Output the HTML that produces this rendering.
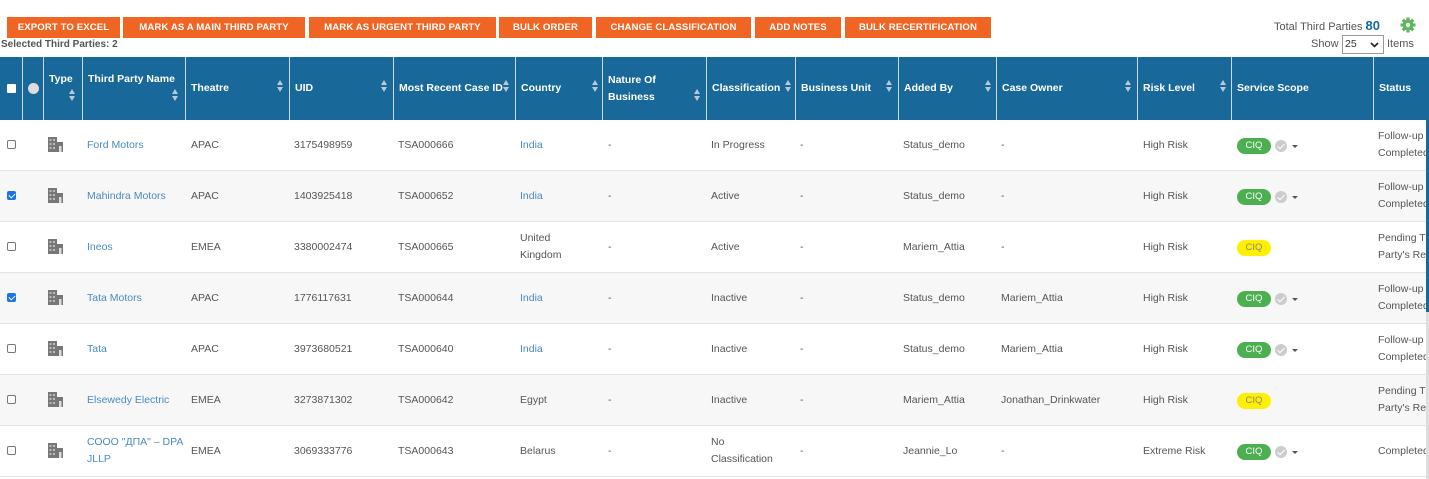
<!DOCTYPE html>
<html><head><meta charset="utf-8"><style>
*{box-sizing:border-box;margin:0;padding:0}
body{width:1429px;height:479px;overflow:hidden;background:#fff;font-family:"Liberation Sans",Arial,sans-serif;position:relative;color:#555}
.btn{position:absolute;top:17px;height:21px;background:#f06424;color:#fff;font-weight:bold;font-size:9.6px;line-height:21px;text-align:center;letter-spacing:0.1px;white-space:nowrap}
.a{position:absolute}
.hd{position:absolute;top:57px;height:63px;left:0;width:1426px;background:#186899}
.hc{position:absolute;top:57px;height:63px;border-left:1px solid #cfd9e3;color:#fff;font-weight:bold;font-size:10.5px;display:flex;align-items:center;padding-left:5px;line-height:17px;white-space:nowrap}
.sort{position:absolute;width:7px;height:13px}
.sort:before{content:"";position:absolute;left:0;top:0;border-left:3.5px solid transparent;border-right:3.5px solid transparent;border-bottom:5px solid #b8c8d8}
.sort:after{content:"";position:absolute;left:0;top:7px;border-left:3.5px solid transparent;border-right:3.5px solid transparent;border-top:5px solid #b8c8d8}
.row{position:absolute;left:0;width:1426px;height:51px;border-bottom:1px solid #e3e3e3}
.c{position:absolute;font-size:10.5px;color:#555;line-height:17px;white-space:nowrap}
.lk{color:#4a8ac0}
.cb{position:absolute;left:7px;width:9px;height:9px;border:1px solid #777;border-radius:2px;background:#fff}
.cb.on{background:#1a73e8;border-color:#1a73e8}
.cb.on:after{content:"";position:absolute;left:2px;top:0px;width:3px;height:5px;border:solid #fff;border-width:0 1.5px 1.5px 0;transform:rotate(45deg)}
.ciq{position:absolute;left:1237px;width:34px;height:16px;border-radius:8px;font-size:9.5px;line-height:16px;text-align:center}
.g{background:#4caf50;color:#fff}
.y{background:#ffef00;color:#888}
.chk{position:absolute;left:1275px;width:12px;height:12px;border-radius:50%;background:#ccc}
.chk:after{content:"";position:absolute;left:4px;top:2px;width:3px;height:6px;border:solid #fff;border-width:0 1.5px 1.5px 0;transform:rotate(45deg)}
.dd{position:absolute;left:1292px;border-left:3px solid transparent;border-right:3px solid transparent;border-top:3px solid #555}
</style></head><body>
<div class="btn" style="left:7px;width:113px">EXPORT TO EXCEL</div>
<div class="btn" style="left:123px;width:182px">MARK AS A MAIN THIRD PARTY</div>
<div class="btn" style="left:309px;width:187px">MARK AS URGENT THIRD PARTY</div>
<div class="btn" style="left:499px;width:93px">BULK ORDER</div>
<div class="btn" style="left:596px;width:155px">CHANGE CLASSIFICATION</div>
<div class="btn" style="left:755px;width:86px">ADD NOTES</div>
<div class="btn" style="left:845px;width:146px">BULK RECERTIFICATION</div>
<div class="a" style="left:1px;top:39px;font-size:10px;font-weight:bold;color:#555">Selected Third Parties: 2</div>
<div class="a" style="left:1274px;top:18px;font-size:11px;color:#555">Total Third Parties <b style="color:#186899;font-size:13px">80</b></div>
<svg class="a" style="left:1400px;top:17px" width="16" height="16" viewBox="0 0 16 16"><g fill="#5cb85c"><circle cx="8" cy="8" r="5.5"/><rect x="6.5" y="0.5" width="3" height="15"/><rect x="0.5" y="6.5" width="15" height="3"/><rect x="6.5" y="0.5" width="3" height="15" transform="rotate(45 8 8)"/><rect x="6.5" y="0.5" width="3" height="15" transform="rotate(-45 8 8)"/></g><circle cx="8" cy="8" r="2.2" fill="#fff"/></svg>
<div class="a" style="left:1311px;top:38px;font-size:11px;color:#555">Show</div>
<div class="a" style="left:1342px;top:35px;width:42px;height:19px;border:1px solid #999;font-size:10.5px;line-height:17px;padding-left:2px;color:#333">25<svg style="position:absolute;right:4px;top:6px" width="9" height="6" viewBox="0 0 9 6"><path d="M1 1l3.5 3.5L8 1" stroke="#222" stroke-width="1.6" fill="none"/></svg></div>
<div class="a" style="left:1387px;top:38px;font-size:11px;color:#555">Items</div>

<div class="hd"></div>
<div class="hc" style="left:0;width:22px;border-left:none"><div style="width:9px;height:9px;background:#fff;border-radius:1px;margin-left:2px"></div></div>
<div class="hc" style="left:22px;width:21px"><div style="width:11px;height:11px;background:#ddd;border-radius:50%"></div></div>
<div class="hc" style="left:43px;width:39px;align-items:flex-start;padding-top:14px">Type<span class="sort" style="left:25px;top:32px"></span></div>
<div class="hc" style="left:82px;width:103px;align-items:flex-start;padding-top:14px">Third Party Name<span class="sort" style="left:89px;top:32px"></span></div>
<div class="hc" style="left:185px;width:104px">Theatre<span class="sort" style="left:91px;top:23px"></span></div>
<div class="hc" style="left:289px;width:104px">UID<span class="sort" style="left:91px;top:23px"></span></div>
<div class="hc" style="left:393px;width:122px">Most Recent Case ID<span class="sort" style="left:109px;top:23px"></span></div>
<div class="hc" style="left:515px;width:87px">Country<span class="sort" style="left:76px;top:23px"></span></div>
<div class="hc" style="left:602px;width:104px">Nature Of<br>Business<span class="sort" style="left:91px;top:32px"></span></div>
<div class="hc" style="left:706px;width:89px">Classification<span class="sort" style="left:78px;top:23px"></span></div>
<div class="hc" style="left:795px;width:103px">Business Unit<span class="sort" style="left:90px;top:23px"></span></div>
<div class="hc" style="left:898px;width:98px">Added By<span class="sort" style="left:86px;top:23px"></span></div>
<div class="hc" style="left:996px;width:141px">Case Owner<span class="sort" style="left:128px;top:23px"></span></div>
<div class="hc" style="left:1137px;width:94px">Risk Level<span class="sort" style="left:82px;top:23px"></span></div>
<div class="hc" style="left:1231px;width:142px">Service Scope</div>
<div class="hc" style="left:1373px;width:53px">Status</div>

<div class="row" style="top:120px"></div>
<div class="row" style="top:171px;background:#f7f7f7"></div>
<div class="row" style="top:222px"></div>
<div class="row" style="top:273px;background:#f7f7f7"></div>
<div class="row" style="top:324px"></div>
<div class="row" style="top:375px;background:#f7f7f7"></div>
<div class="row" style="top:426px"></div>

<svg width="0" height="0" style="position:absolute"><defs><symbol id="bld" viewBox="0 0 15 15"><rect x="0" y="0" width="9" height="15" fill="#777"/><g fill="#bbb"><rect x="1.5" y="2" width="2" height="2"/><rect x="5" y="2" width="2" height="2"/><rect x="1.5" y="6" width="2" height="2"/><rect x="5" y="6" width="2" height="2"/><rect x="1.5" y="10" width="2" height="2"/><rect x="5" y="10" width="2" height="2"/></g><rect x="9" y="5" width="6" height="10" fill="#777"/><rect x="11" y="9" width="2.5" height="6" fill="#ddd"/></symbol></defs></svg>

<div class="cb" style="top:140px"></div><svg class="a" style="left:48px;top:137px" width="15" height="15"><use href="#bld"/></svg>
<div class="c lk" style="left:87px;top:137px">Ford Motors</div><div class="c" style="left:191px;top:137px">APAC</div><div class="c" style="left:294px;top:137px">3175498959</div><div class="c" style="left:398px;top:137px">TSA000666</div><div class="c lk" style="left:520px;top:137px">India</div><div class="c" style="left:608px;top:137px">-</div><div class="c" style="left:711px;top:137px">In Progress</div><div class="c" style="left:800px;top:137px">-</div><div class="c" style="left:903px;top:137px">Status_demo</div><div class="c" style="left:1001px;top:137px">-</div><div class="c" style="left:1143px;top:137px">High Risk</div>
<div class="ciq g" style="top:138px">CIQ</div><div class="chk" style="top:140px"></div><div class="dd" style="top:145px"></div>
<div class="c" style="left:1378px;top:128px">Follow-up<br>Completed</div>

<div class="cb on" style="top:191px"></div><svg class="a" style="left:48px;top:188px" width="15" height="15"><use href="#bld"/></svg>
<div class="c lk" style="left:87px;top:188px">Mahindra Motors</div><div class="c" style="left:191px;top:188px">APAC</div><div class="c" style="left:294px;top:188px">1403925418</div><div class="c" style="left:398px;top:188px">TSA000652</div><div class="c lk" style="left:520px;top:188px">India</div><div class="c" style="left:608px;top:188px">-</div><div class="c" style="left:711px;top:188px">Active</div><div class="c" style="left:800px;top:188px">-</div><div class="c" style="left:903px;top:188px">Status_demo</div><div class="c" style="left:1001px;top:188px">-</div><div class="c" style="left:1143px;top:188px">High Risk</div>
<div class="ciq g" style="top:189px">CIQ</div><div class="chk" style="top:191px"></div><div class="dd" style="top:196px"></div>
<div class="c" style="left:1378px;top:179px">Follow-up<br>Completed</div>

<div class="cb" style="top:242px"></div><svg class="a" style="left:48px;top:239px" width="15" height="15"><use href="#bld"/></svg>
<div class="c lk" style="left:87px;top:239px">Ineos</div><div class="c" style="left:191px;top:239px">EMEA</div><div class="c" style="left:294px;top:239px">3380002474</div><div class="c" style="left:398px;top:239px">TSA000665</div><div class="c" style="left:520px;top:230px">United<br>Kingdom</div><div class="c" style="left:608px;top:239px">-</div><div class="c" style="left:711px;top:239px">Active</div><div class="c" style="left:800px;top:239px">-</div><div class="c" style="left:903px;top:239px">Mariem_Attia</div><div class="c" style="left:1001px;top:239px">-</div><div class="c" style="left:1143px;top:239px">High Risk</div>
<div class="ciq y" style="top:240px">CIQ</div>
<div class="c" style="left:1378px;top:230px">Pending Third<br>Party's Response</div>

<div class="cb on" style="top:293px"></div><svg class="a" style="left:48px;top:290px" width="15" height="15"><use href="#bld"/></svg>
<div class="c lk" style="left:87px;top:290px">Tata Motors</div><div class="c" style="left:191px;top:290px">APAC</div><div class="c" style="left:294px;top:290px">1776117631</div><div class="c" style="left:398px;top:290px">TSA000644</div><div class="c lk" style="left:520px;top:290px">India</div><div class="c" style="left:608px;top:290px">-</div><div class="c" style="left:711px;top:290px">Inactive</div><div class="c" style="left:800px;top:290px">-</div><div class="c" style="left:903px;top:290px">Status_demo</div><div class="c" style="left:1001px;top:290px">Mariem_Attia</div><div class="c" style="left:1143px;top:290px">High Risk</div>
<div class="ciq g" style="top:291px">CIQ</div><div class="chk" style="top:293px"></div><div class="dd" style="top:298px"></div>
<div class="c" style="left:1378px;top:281px">Follow-up<br>Completed</div>

<div class="cb" style="top:344px"></div><svg class="a" style="left:48px;top:341px" width="15" height="15"><use href="#bld"/></svg>
<div class="c lk" style="left:87px;top:341px">Tata</div><div class="c" style="left:191px;top:341px">APAC</div><div class="c" style="left:294px;top:341px">3973680521</div><div class="c" style="left:398px;top:341px">TSA000640</div><div class="c lk" style="left:520px;top:341px">India</div><div class="c" style="left:608px;top:341px">-</div><div class="c" style="left:711px;top:341px">Inactive</div><div class="c" style="left:800px;top:341px">-</div><div class="c" style="left:903px;top:341px">Status_demo</div><div class="c" style="left:1001px;top:341px">Mariem_Attia</div><div class="c" style="left:1143px;top:341px">High Risk</div>
<div class="ciq g" style="top:342px">CIQ</div><div class="chk" style="top:344px"></div><div class="dd" style="top:349px"></div>
<div class="c" style="left:1378px;top:332px">Follow-up<br>Completed</div>

<div class="cb" style="top:395px"></div><svg class="a" style="left:48px;top:392px" width="15" height="15"><use href="#bld"/></svg>
<div class="c lk" style="left:87px;top:392px">Elsewedy Electric</div><div class="c" style="left:191px;top:392px">EMEA</div><div class="c" style="left:294px;top:392px">3273871302</div><div class="c" style="left:398px;top:392px">TSA000642</div><div class="c" style="left:520px;top:392px">Egypt</div><div class="c" style="left:608px;top:392px">-</div><div class="c" style="left:711px;top:392px">Inactive</div><div class="c" style="left:800px;top:392px">-</div><div class="c" style="left:903px;top:392px">Mariem_Attia</div><div class="c" style="left:1001px;top:392px">Jonathan_Drinkwater</div><div class="c" style="left:1143px;top:392px">High Risk</div>
<div class="ciq y" style="top:393px">CIQ</div>
<div class="c" style="left:1378px;top:383px">Pending Third<br>Party's Response</div>

<div class="cb" style="top:446px"></div><svg class="a" style="left:48px;top:443px" width="15" height="15"><use href="#bld"/></svg>
<div class="c lk" style="left:87px;top:434px">СООО "ДПА" – DPA<br>JLLP</div><div class="c" style="left:191px;top:443px">EMEA</div><div class="c" style="left:294px;top:443px">3069333776</div><div class="c" style="left:398px;top:443px">TSA000643</div><div class="c" style="left:520px;top:443px">Belarus</div><div class="c" style="left:608px;top:443px">-</div><div class="c" style="left:711px;top:434px">No<br>Classification</div><div class="c" style="left:800px;top:443px">-</div><div class="c" style="left:903px;top:443px">Jeannie_Lo</div><div class="c" style="left:1001px;top:443px">-</div><div class="c" style="left:1143px;top:443px">Extreme Risk</div>
<div class="ciq g" style="top:444px">CIQ</div><div class="chk" style="top:446px"></div><div class="dd" style="top:451px"></div>
<div class="c" style="left:1378px;top:443px">Completed</div>

<div class="a" style="left:1426px;top:57px;width:3px;height:422px;background:#ddd"></div>
<div class="a" style="left:1426px;top:57px;width:3px;height:255px;background:#186899"></div>
</body></html>
